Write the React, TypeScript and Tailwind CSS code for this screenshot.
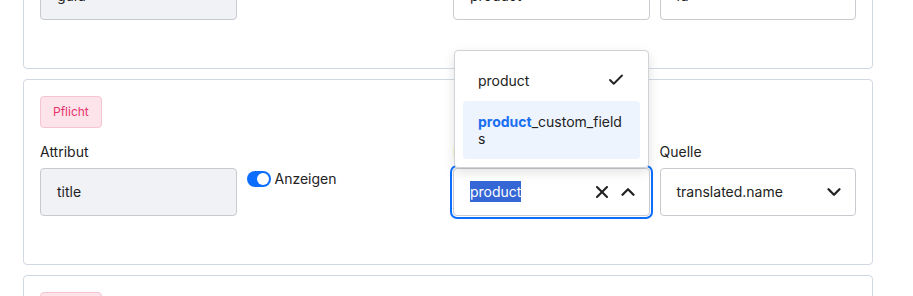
import React from "react";
import { X, ChevronUp, ChevronDown, Check } from "lucide-react";

const font = { fontFamily: "Inter, 'Noto Sans', sans-serif" };

function Badge() {
  return (
    <div className="mb-[14px] flex">
      <span className="rounded-[4px] border border-[#f6c3d0] bg-[#fde4eb] px-3 py-[7px] text-xs leading-4 text-[#e6336c]">
        Pflicht
      </span>
    </div>
  );
}

function Label({ children }: { children: React.ReactNode }) {
  return <div className="mb-[6px] h-5 text-sm leading-5 text-[#222]">{children}</div>;
}

function Toggle() {
  return (
    <div className="mt-[29px] flex h-4 items-center gap-1">
      <div className="flex h-4 w-6 items-center justify-end rounded-full bg-[#0d6efd] px-[2px]">
        <div className="h-3 w-3 rounded-full bg-white" />
      </div>
      <span className="text-sm leading-5 text-[#222]">Anzeigen</span>
    </div>
  );
}

function Card({
  attr,
  entity,
  source,
  active,
}: {
  attr: string;
  entity: string;
  source: string;
  active?: boolean;
}) {
  return (
    <div className="h-[186px] rounded-[4px] border border-[#d3d9e0] bg-white px-4 pt-4">
      <Badge />
      <div className="grid grid-cols-4 gap-[10px]">
        <div>
          <Label>Attribut</Label>
          <div className="flex h-12 items-center rounded-[4px] border border-[#c9cacf] bg-[#f1f2f6] px-4 text-sm text-[#222]">
            {attr}
          </div>
        </div>
        <div>
          <Toggle />
        </div>
        <div className="relative">
          <Label>Entität</Label>
          <div
            className={
              "relative flex h-12 items-center rounded-[4px] border border-[#c9cacf] bg-white pl-4 pr-[10px] text-sm text-[#222] " +
              (active ? "ring-2 ring-[#0d6efd] ring-offset-1" : "")
            }
          >
            <div className="flex-1">
              {active ? (
                <span className="bg-[#3466d5] py-[2px] leading-[22px] text-white">{entity}</span>
              ) : (
                entity
              )}
            </div>
            {active ? (
              <>
                <X size={20} strokeWidth={2.5} className="text-[#222]" />
                <ChevronUp size={22} strokeWidth={2.5} className="ml-[5px] text-[#222]" />
              </>
            ) : (
              <ChevronDown size={22} strokeWidth={2.5} className="text-[#222]" />
            )}
            {active && (
              <div className="absolute bottom-[calc(100%+1px)] left-0 right-0 z-10 rounded-[4px] border border-[#cfd2d6] bg-white p-2 shadow-[0_4px_12px_rgba(0,0,0,0.12)]">
                <div className="flex items-center justify-between px-[15px] py-3 text-sm leading-[17px] text-[#222]">
                  <span>product</span>
                  <Check size={18} strokeWidth={2.5} className="text-[#222]" />
                </div>
                <div className="rounded-[4px] bg-[#edf4fe] px-[15px] py-3 text-sm leading-[17px] text-[#222]">
                  <div className="w-[147px] break-all">
                    <span className="font-bold text-[#1a6ef0]">product</span>_custom_fields
                  </div>
                </div>
              </div>
            )}
          </div>
        </div>
        <div>
          <Label>Quelle</Label>
          <div className="flex h-12 items-center rounded-[4px] border border-[#c9cacf] bg-white pl-4 pr-[10px] text-sm text-[#222]">
            <div className="flex-1">{source}</div>
            <ChevronDown size={22} strokeWidth={2.5} className="text-[#222]" />
          </div>
        </div>
      </div>
    </div>
  );
}

export default function App() {
  return (
    <div className="h-[296px] overflow-hidden bg-white" style={font}>
      <div className="-mt-[117px] ml-[23px] flex w-[850px] flex-col gap-[10px]">
        <Card attr="guid" entity="product" source="id" />
        <Card attr="title" entity="product" source="translated.name" active />
        <Card attr="description" entity="product" source="translated.description" />
      </div>
    </div>
  );
}
